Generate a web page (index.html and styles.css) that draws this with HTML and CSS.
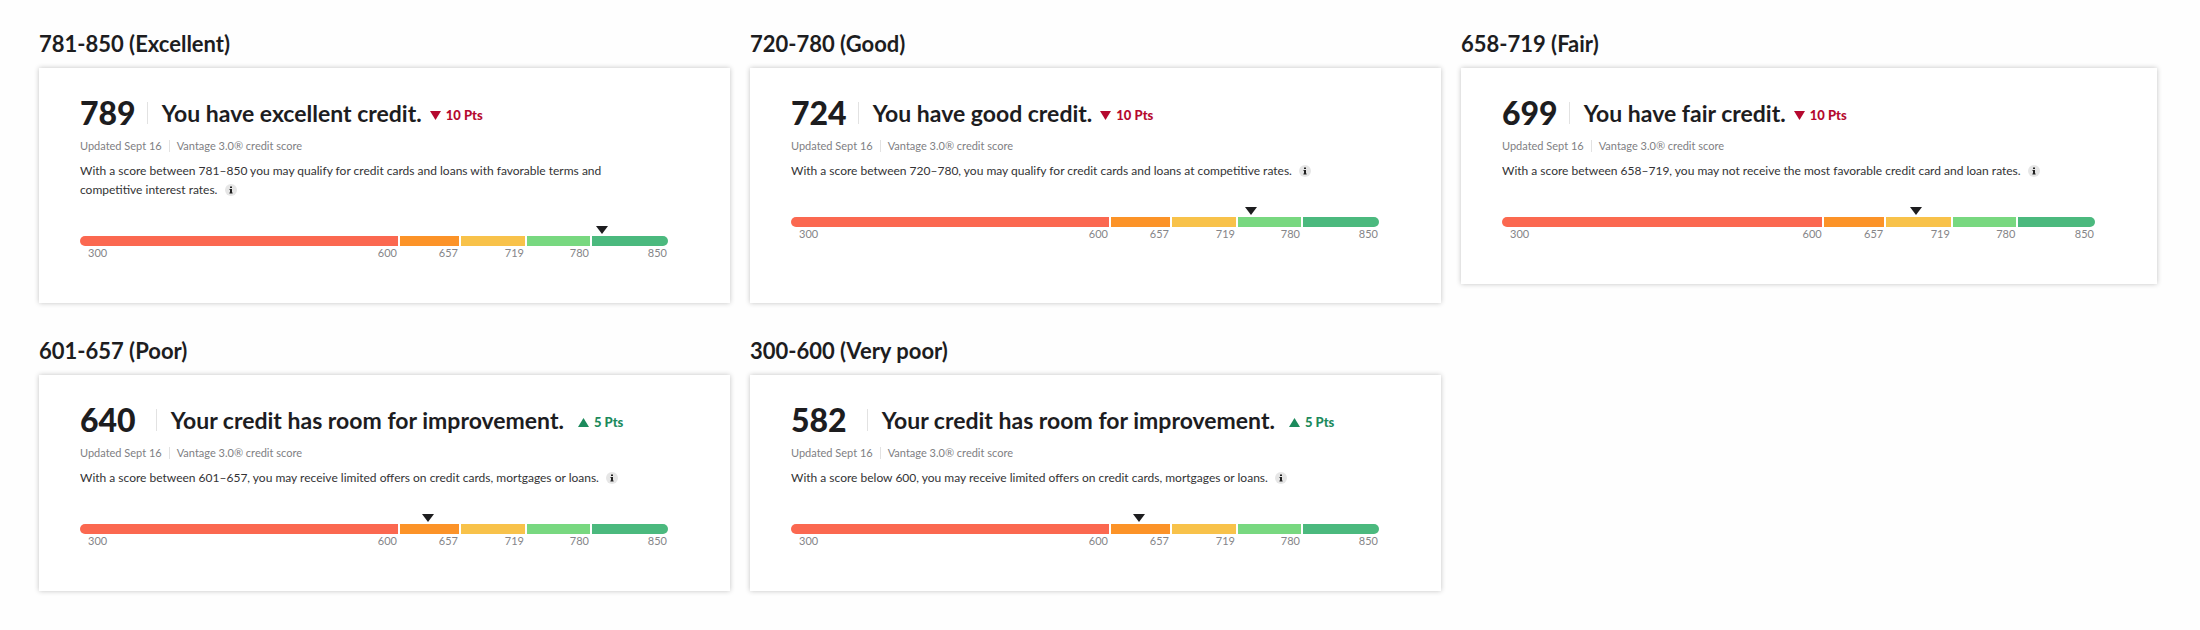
FILE: index.html
```html
<!DOCTYPE html>
<html lang="en">
<head>
  <meta charset="UTF-8" />
  <meta name="viewport" content="width=device-width, initial-scale=1.0" />
  <title>Credit score states</title>
  <link rel="stylesheet" href="styles.css">
</head>
<body>
  <main class="grid">
    <section class="state">
      <h2>781-850 (Excellent)</h2>
      <div class="card">
        <div class="top">
          <span class="score">789</span>
          <h3>You have excellent credit.</h3>
          <span class="change down"><svg width="11" height="9" viewBox="0 0 11 9"><path d="M0 0h11L5.5 9z"/></svg>10 Pts</span>
        </div>
        <div class="meta"><span>Updated Sept 16</span><span>Vantage 3.0® credit score</span></div>
        <p>With a score between 781–850 you may qualify for credit cards and loans with favorable terms and competitive interest rates. <button class="info" aria-label="More info"><svg width="12" height="12" viewBox="0 0 12 12"><path d="M5 2.5h2v1.6H5zM4.5 5H7v3.5h.6v1H4.4v-1H5V6h-.5z"/></svg></button></p>
        <div class="meter">
          <div class="pointer" style="left: 88.8%"></div>
          <div class="bar"><i></i><i></i><i></i><i></i><i></i></div>
          <div class="labels"><div><span>300</span><span>600</span></div><span>657</span><span>719</span><span>780</span><span>850</span></div>
        </div>
      </div>
    </section>

    <section class="state">
      <h2>720-780 (Good)</h2>
      <div class="card">
        <div class="top">
          <span class="score">724</span>
          <h3>You have good credit.</h3>
          <span class="change down"><svg width="11" height="9" viewBox="0 0 11 9"><path d="M0 0h11L5.5 9z"/></svg>10 Pts</span>
        </div>
        <div class="meta"><span>Updated Sept 16</span><span>Vantage 3.0® credit score</span></div>
        <p>With a score between 720–780, you may qualify for credit cards and loans at competitive rates. <button class="info" aria-label="More info"><svg width="12" height="12" viewBox="0 0 12 12"><path d="M5 2.5h2v1.6H5zM4.5 5H7v3.5h.6v1H4.4v-1H5V6h-.5z"/></svg></button></p>
        <div class="meter">
          <div class="pointer" style="left: 78.2%"></div>
          <div class="bar"><i></i><i></i><i></i><i></i><i></i></div>
          <div class="labels"><div><span>300</span><span>600</span></div><span>657</span><span>719</span><span>780</span><span>850</span></div>
        </div>
      </div>
    </section>

    <section class="state short">
      <h2>658-719 (Fair)</h2>
      <div class="card">
        <div class="top">
          <span class="score">699</span>
          <h3>You have fair credit.</h3>
          <span class="change down"><svg width="11" height="9" viewBox="0 0 11 9"><path d="M0 0h11L5.5 9z"/></svg>10 Pts</span>
        </div>
        <div class="meta"><span>Updated Sept 16</span><span>Vantage 3.0® credit score</span></div>
        <p>With a score between 658–719, you may not receive the most favorable credit card and loan rates. <button class="info" aria-label="More info"><svg width="12" height="12" viewBox="0 0 12 12"><path d="M5 2.5h2v1.6H5zM4.5 5H7v3.5h.6v1H4.4v-1H5V6h-.5z"/></svg></button></p>
        <div class="meter">
          <div class="pointer" style="left: 69.8%"></div>
          <div class="bar"><i></i><i></i><i></i><i></i><i></i></div>
          <div class="labels"><div><span>300</span><span>600</span></div><span>657</span><span>719</span><span>780</span><span>850</span></div>
        </div>
      </div>
    </section>

    <section class="state roomy">
      <h2>601-657 (Poor)</h2>
      <div class="card">
        <div class="top">
          <span class="score">640</span>
          <h3>Your credit has room for improvement.</h3>
          <span class="change up"><svg width="11" height="9" viewBox="0 0 11 9"><path d="M0 9h11L5.5 0z"/></svg>5 Pts</span>
        </div>
        <div class="meta"><span>Updated Sept 16</span><span>Vantage 3.0® credit score</span></div>
        <p>With a score between 601–657, you may receive limited offers on credit cards, mortgages or loans. <button class="info" aria-label="More info"><svg width="12" height="12" viewBox="0 0 12 12"><path d="M5 2.5h2v1.6H5zM4.5 5H7v3.5h.6v1H4.4v-1H5V6h-.5z"/></svg></button></p>
        <div class="meter">
          <div class="pointer" style="left: 59.1%"></div>
          <div class="bar"><i></i><i></i><i></i><i></i><i></i></div>
          <div class="labels"><div><span>300</span><span>600</span></div><span>657</span><span>719</span><span>780</span><span>850</span></div>
        </div>
      </div>
    </section>

    <section class="state roomy">
      <h2>300-600 (Very poor)</h2>
      <div class="card">
        <div class="top">
          <span class="score">582</span>
          <h3>Your credit has room for improvement.</h3>
          <span class="change up"><svg width="11" height="9" viewBox="0 0 11 9"><path d="M0 9h11L5.5 0z"/></svg>5 Pts</span>
        </div>
        <div class="meta"><span>Updated Sept 16</span><span>Vantage 3.0® credit score</span></div>
        <p>With a score below 600, you may receive limited offers on credit cards, mortgages or loans. <button class="info" aria-label="More info"><svg width="12" height="12" viewBox="0 0 12 12"><path d="M5 2.5h2v1.6H5zM4.5 5H7v3.5h.6v1H4.4v-1H5V6h-.5z"/></svg></button></p>
        <div class="meter">
          <div class="pointer" style="left: 59.1%"></div>
          <div class="bar"><i></i><i></i><i></i><i></i><i></i></div>
          <div class="labels"><div><span>300</span><span>600</span></div><span>657</span><span>719</span><span>780</span><span>850</span></div>
        </div>
      </div>
    </section>
  </main>
</body>
</html>
```
FILE: styles.css
```css
* { margin: 0; padding: 0; box-sizing: border-box; }
body {
  font-family: Lato, sans-serif;
  background: #fefefe;
  color: #1d1d1f;
}
.grid {
  display: grid;
  grid-template-columns: 691fr 691fr 696fr;
  gap: 34px 20px;
  padding: 30px 43px 30px 39px;
}
.state {
  display: flex;
  flex-direction: column;
}
.state.short { align-self: start; }
h2 {
  font-size: 22px;
  line-height: 28px;
  margin-bottom: 10px;
}
.card {
  flex: 1;
  padding: 27px 62px 44px 41px;
  background: #fff;
  box-shadow: 0 0 5px rgba(0, 0, 0, 0.24);
}
.top {
  display: flex;
  align-items: center;
  height: 36px;
}
.score {
  font-size: 32px;
  line-height: 36px;
  font-weight: 900;
}
h3 {
  margin-left: 11px;
  padding-left: 14px;
  border-left: 1px solid #e2e2e2;
  font-size: 23px;
  line-height: 22px;
}
.change {
  display: flex;
  align-items: center;
  gap: 5px;
  margin-left: 8px;
  padding-top: 4px;
  font-size: 13px;
  line-height: 16px;
  font-weight: 900;
}
.change svg { fill: currentColor; }
.down { color: #b5092f; }
.up { color: #1c8a5c; }
.roomy h3 { margin-left: 20px; }
.roomy .change { margin-left: 14px; }
.meta {
  display: flex;
  margin-top: 9px;
  font-size: 11px;
  line-height: 12px;
  color: #808083;
}
.meta span + span {
  margin-left: 7px;
  padding-left: 7px;
  border-left: 1px solid #e2e2e2;
}
p {
  max-width: 564px;
  margin-top: 9px;
  font-size: 12px;
  line-height: 19px;
  color: #333335;
}
.info {
  width: 12px;
  height: 12px;
  margin-left: 4px;
  border: none;
  border-radius: 50%;
  background: #e6e6e6;
  vertical-align: -2px;
  cursor: pointer;
}
.info svg { display: block; fill: #222; }
.meter {
  position: relative;
  margin-top: 37px;
}
.pointer {
  position: absolute;
  top: -10px;
  margin-left: -6px;
  border: 6px solid transparent;
  border-top: 8px solid #1d1d1f;
  border-bottom: 0;
}
.bar, .labels {
  display: grid;
  grid-template-columns: 317fr 59fr 64fr 63fr 76fr;
  column-gap: 2px;
}
.bar i { height: 10px; }
.bar i:nth-child(1) { background: #fb6850; border-radius: 5px 0 0 5px; }
.bar i:nth-child(2) { background: #fc9328; }
.bar i:nth-child(3) { background: #f8c24a; }
.bar i:nth-child(4) { background: #78d880; }
.bar i:nth-child(5) { background: #4bb97e; border-radius: 0 5px 5px 0; }
.labels {
  margin-top: 1px;
  padding-right: 1px;
  font-size: 11px;
  line-height: 12px;
  color: #858588;
  text-align: right;
}
.labels div {
  display: flex;
  justify-content: space-between;
  padding-left: 8px;
}
```
